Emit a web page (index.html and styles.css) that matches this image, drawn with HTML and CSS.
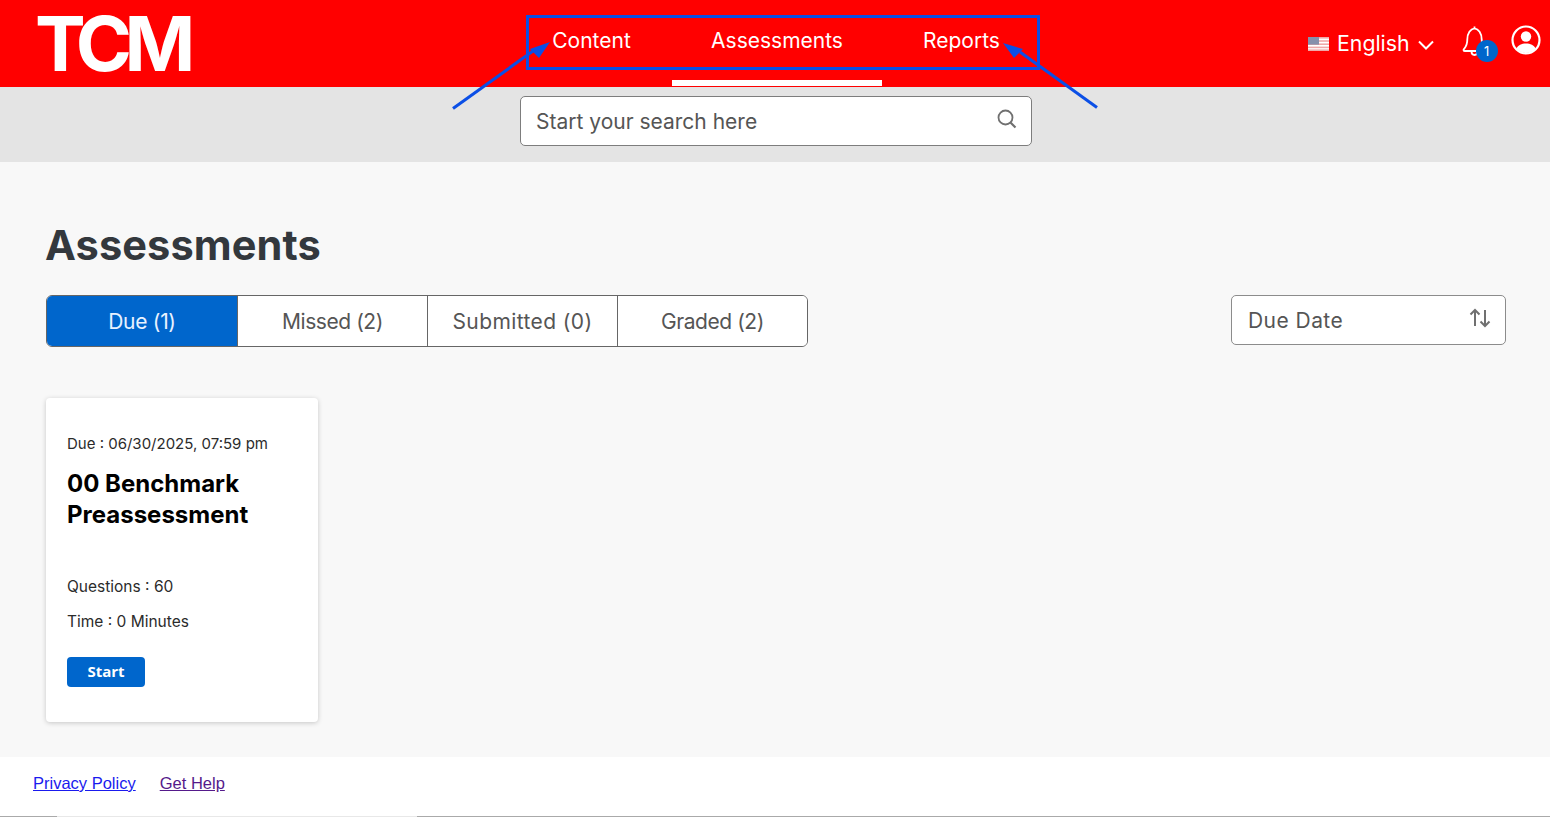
FILE: index.html
```html
<!DOCTYPE html>
<html lang="en">
<head>
<meta charset="utf-8">
<title>Assessments</title>
<link rel="stylesheet" href="styles.css">
</head>
<body>
<header class="topbar">
  <a class="logo">TCM</a>
  <nav class="nav">
    <a class="nav-item">Content</a>
    <a class="nav-item active">Assessments</a>
    <a class="nav-item">Reports</a>
  </nav>
  <div class="tools">
    <svg class="flag" viewBox="0 0 21 14" width="21" height="14">
      <rect width="21" height="14" fill="#fff"/>
      <g fill="#f0a8a8"><rect y="0" width="21" height="1.6"/><rect y="3.2" width="21" height="1.6"/><rect y="6.4" width="21" height="1.6"/><rect y="9.6" width="21" height="1.6"/><rect y="12.4" width="21" height="1.6"/></g>
      <rect width="11" height="7.6" fill="#8790ac"/>
    </svg>
    <span class="lang">English</span>
    <svg class="chev" viewBox="0 0 16 10" width="16" height="10"><path d="M1 1.500l7 7 7-7" fill="none" stroke="#fff" stroke-width="2"/></svg>
    <span class="bell">
      <svg viewBox="0 0 26 32" width="26" height="32"><path d="M1.500 25c0-1.500 3.800-2.500 3.800-10.500C5.300 8 8.500 3.800 12.500 3.300c4 .5 7.200 4.700 7.200 11.200 0 8 3.800 9 3.800 10.500 0 .6-.5 1-1.200 1H2.700C2 26 1.500 25.600 1.500 25zM12.500 3.300V1.500M9.500 26.500c0 2 1.300 3.500 3 3.500s3-1.500 3-3.500" fill="none" stroke="#fff" stroke-width="1.800" stroke-linejoin="round"/></svg>
      <span class="badge">1</span>
    </span>
    <svg class="user" viewBox="0 0 30 30" width="30" height="30">
      <circle cx="15" cy="15" r="13.500" fill="none" stroke="#fff" stroke-width="2.200"/>
      <circle cx="15" cy="11.500" r="5.200" fill="#fff"/>
      <path d="M5.500 23.500c1.500-3.500 5-5 9.500-5s8 1.500 9.500 5c-2.500 2.800-5.800 4.500-9.500 4.500s-7-1.700-9.500-4.500z" fill="#fff"/>
    </svg>
  </div>
</header>
<div class="searchbar">
  <div class="search">
    <span>Start your search here</span>
    <svg viewBox="0 0 20 20" width="20" height="20"><circle cx="8.500" cy="8.500" r="7" fill="none" stroke="#707070" stroke-width="1.800"/><path d="M13.500 13.500l5 5" stroke="#707070" stroke-width="2.200" fill="none"/></svg>
  </div>
</div>
<main class="main">
  <h1 class="title">Assessments</h1>
  <div class="controls">
    <div class="tabs">
      <button class="tab on">Due (1)</button>
      <button class="tab tight">Missed (2)</button>
      <button class="tab loose">Submitted (0)</button>
      <button class="tab tight">Graded (2)</button>
    </div>
    <div class="sort">
      <span>Due Date</span>
      <svg viewBox="0 0 22 20" width="22" height="20"><path d="M6 18V2M1.500 6.500L6 2l4.500 4.500M16 2v16M11.500 13.500L16 18l4.500-4.500" fill="none" stroke="#707070" stroke-width="2"/></svg>
    </div>
  </div>
  <article class="card">
    <p class="due">Due : 06/30/2025, 07:59 pm</p>
    <h2 class="card-title">00 Benchmark Preassessment</h2>
    <p class="meta q">Questions : 60</p>
    <p class="meta t">Time : 0 Minutes</p>
    <button class="start">Start</button>
  </article>
</main>
<footer class="footer">
  <a class="link" href="#a">Privacy Policy</a>
  <a class="link visited" href="#b">Get Help</a>
</footer>
<svg class="annot" viewBox="0 0 1550 817" width="1550" height="817">
  <rect x="527.500" y="16.500" width="511" height="52" fill="none" stroke="#0b4fe6" stroke-width="3"/>
  <path d="M453 108.500L533 51" stroke="#0b4fe6" stroke-width="3" fill="none"/>
  <path d="M550 42L530 49 539 58z" fill="#0b4fe6"/>
  <path d="M1097 107.500L1020 52" stroke="#0b4fe6" stroke-width="3" fill="none"/>
  <path d="M1003 43L1023 49 1014 58z" fill="#0b4fe6"/>
</svg>
</body>
</html>
```
FILE: styles.css
```css
* { box-sizing: border-box; }
html, body { margin: 0; padding: 0; }
body {
  width: 1550px;
  height: 817px;
  overflow: hidden;
  position: relative;
  font-family: Inter, "Liberation Sans", sans-serif;
  background: #fff;
}
.topbar {
  height: 87px;
  background: #ff0000;
  display: grid;
  grid-template-columns: 511px 530px 1fr;
  color: #fff;
}
.logo {
  font-size: 76px;
  font-weight: 700;
  line-height: 87px;
  letter-spacing: -7.500px;
  padding-left: 35px;
  color: #fff;
}
.nav { display: grid; grid-template-columns: 161px 210px 159px; height: 86px; }
.nav-item {
  font-size: 21px;
  line-height: 81px;
  height: 86px;
  text-align: center;
  white-space: nowrap;
}
.nav-item.active { border-bottom: 6px solid #fff; }
.tools {
  display: flex;
  align-items: center;
  padding-left: 267px;
}
.lang { margin-left: 8px; margin-top: -2px; font-size: 21.300px; }
.chev { margin-left: 8px; margin-top: 2px; }
.bell { position: relative; margin-left: 28px; display: block; width: 26px; height: 32px; margin-top: -6px; }
.bell svg { display: block; }
.badge {
  position: absolute;
  left: 14px;
  top: 15px;
  width: 22px;
  height: 22px;
  border-radius: 50%;
  background: #0066cc;
  font-size: 13px;
  line-height: 22px;
  text-align: center;
}
.user { margin-left: 23px; margin-top: -7px; }
.searchbar {
  height: 75px;
  background: #e4e4e4;
  padding: 9px 0 0 520px;
}
.search {
  width: 512px;
  height: 50px;
  background: #fff;
  border: 1px solid #7d7d7d;
  border-radius: 5px;
  display: flex;
  align-items: center;
  justify-content: space-between;
  padding: 0 14px 4px 15px;
  font-size: 21px;
  color: #555;
}
.search span { margin-top: 4px; }
.main {
  height: 595px;
  background: #f8f8f8;
  padding: 57px 44px 0 46px;
}
.title {
  margin: 0 0 0 -1px;
  font-size: 41.500px;
  line-height: 52px;
  font-weight: 700;
  letter-spacing: .1px;
  color: #33383d;
}
.controls {
  margin-top: 24px;
  display: flex;
  justify-content: space-between;
  align-items: flex-start;
}
.tabs {
  display: flex;
  width: 762px;
  height: 52px;
  border: 1px solid #666;
  border-radius: 6px;
  overflow: hidden;
  background: #fff;
}
.tab {
  flex: 0 0 190px;
  border: 0;
  border-left: 1px solid #666;
  background: #fff;
  font: inherit;
  font-size: 21px;
  color: #555;
  padding: 0;
}
.tab:first-child { border-left: 0; }
.tab.on { background: #0066cc; color: #e8f2ff; letter-spacing: -.3px; }
.tab.tight { letter-spacing: -.45px; }
.tab.loose { letter-spacing: .4px; }
.sort {
  width: 275px;
  height: 50px;
  background: #fff;
  border: 1px solid #8c8c8c;
  border-radius: 5px;
  display: flex;
  align-items: center;
  justify-content: space-between;
  padding: 0 14px 4px 16px;
  font-size: 21px;
  letter-spacing: .45px;
  color: #555;
}
.sort span { margin-top: 4px; }
.card {
  margin-top: 51px;
  width: 272px;
  height: 324px;
  background: #fff;
  border-radius: 4px;
  box-shadow: 0 1px 5px rgba(0,0,0,.2);
  padding: 36px 20px 0 21px;
}
.due, .meta { margin: 0; font-size: 15.500px; line-height: 20px; color: #2b2b2b; white-space: nowrap; }
.due { font-size: 15px; }
.card-title {
  margin: 14px 0 0;
  font-size: 24px;
  line-height: 31px;
  font-weight: 700;
  color: #000;
}
.q { margin-top: 47px; }
.t { margin-top: 15px; }
.start {
  display: block;
  margin-top: 25px;
  width: 78px;
  height: 30px;
  border: 0;
  border-radius: 4px;
  background: #0066cc;
  color: #fff;
  font-family: "Open Sans", sans-serif;
  font-size: 15px;
  font-weight: 700;
  padding: 0 0 3px;
}
.footer {
  height: 60px;
  background: linear-gradient(90deg, #aaa 57px, #e8e8e8 57px, #e8e8e8 417px, #aaa 417px) bottom / 100% 1px no-repeat #fff;
  padding: 16px 0 0 33px;
  display: flex;
  gap: 24px;
  align-items: flex-start;
  font-family: "Liberation Sans", sans-serif;
  font-size: 16.500px;
  line-height: 21px;
}
.link { color: #1a1aee; text-decoration: underline; }
.link.visited { color: #551a8b; }
.annot { position: absolute; left: 0; top: 0; pointer-events: none; }
```
